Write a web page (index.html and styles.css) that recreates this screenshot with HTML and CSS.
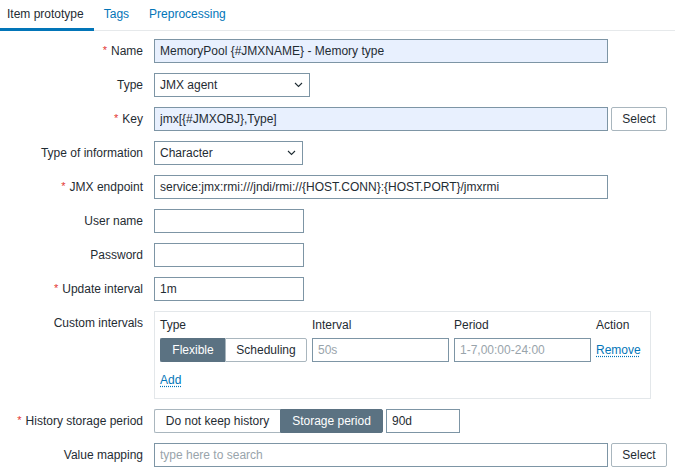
FILE: index.html
```html
<!DOCTYPE html>
<html>
<head>
<meta charset="utf-8">
<link rel="stylesheet" href="styles.css">
</head>
<body>
<div class="tabs">
  <a class="tab active">Item prototype</a>
  <a class="tab">Tags</a>
  <a class="tab">Preprocessing</a>
</div>
<form class="form">
  <label class="lbl"><span class="req">*</span>Name</label>
  <div class="field"><input class="inp w-xl filled" value="MemoryPool {#JMXNAME} - Memory type"></div>

  <label class="lbl">Type</label>
  <div class="field"><div class="select w-type"><span>JMX agent</span><svg width="9" height="6" viewBox="0 0 9 6"><path d="M1 1 L4.5 4.5 L8 1" fill="none" stroke="#1f2c33" stroke-width="1.1"/></svg></div></div>

  <label class="lbl"><span class="req">*</span>Key</label>
  <div class="field"><input class="inp w-xl filled" value="jmx[{#JMXOBJ},Type]"><button type="button" class="btn">Select</button></div>

  <label class="lbl">Type of information</label>
  <div class="field"><div class="select w-toi"><span>Character</span><svg width="9" height="6" viewBox="0 0 9 6"><path d="M1 1 L4.5 4.5 L8 1" fill="none" stroke="#1f2c33" stroke-width="1.1"/></svg></div></div>

  <label class="lbl"><span class="req">*</span>JMX endpoint</label>
  <div class="field"><input class="inp w-xl" value="service:jmx:rmi:///jndi/rmi://{HOST.CONN}:{HOST.PORT}/jmxrmi"></div>

  <label class="lbl">User name</label>
  <div class="field"><input class="inp w-sm" value=""></div>

  <label class="lbl">Password</label>
  <div class="field"><input class="inp w-sm" value=""></div>

  <label class="lbl"><span class="req">*</span>Update interval</label>
  <div class="field"><input class="inp w-sm" value="1m"></div>

  <label class="lbl">Custom intervals</label>
  <div class="field">
    <div class="intervals">
      <div class="itable">
        <div class="th">Type</div>
        <div class="th">Interval</div>
        <div class="th">Period</div>
        <div class="th">Action</div>
        <div class="seg"><span class="on s-flex">Flexible</span><span class="s-sched">Scheduling</span></div>
        <input class="inp w-int" placeholder="50s">
        <input class="inp w-int" placeholder="1-7,00:00-24:00">
        <div class="act"><a class="link">Remove</a></div>
      </div>
      <div class="add"><a class="link">Add</a></div>
    </div>
  </div>

  <label class="lbl"><span class="req">*</span>History storage period</label>
  <div class="field"><div class="seg"><span class="s-nokeep">Do not keep history</span><span class="on s-store">Storage period</span></div><input class="inp w-hist" value="90d"></div>

  <label class="lbl">Value mapping</label>
  <div class="field"><input class="inp w-xl" placeholder="type here to search"><button type="button" class="btn">Select</button></div>
</form>
</body>
</html>
```

FILE: styles.css
```css
* { box-sizing: border-box; }
body {
  margin: 0;
  font-family: "Liberation Sans", Arial, sans-serif;
  font-size: 12px;
  color: #1f2c33;
  background: #fff;
}
.tabs {
  display: flex;
  height: 31px;
  border-bottom: 1px solid #e6e9eb;
}
.tab {
  display: block;
  padding: 0 10px;
  line-height: 28px;
  height: 31px;
  border-bottom: 3px solid transparent;
  color: #0275b8;
  cursor: pointer;
}
.tab.active {
  color: #1f2c33;
  border-bottom-color: #0275b8;
  padding-left: 7px;
}
.form {
  display: grid;
  grid-template-columns: 143px auto;
  column-gap: 11px;
  row-gap: 10px;
  padding-top: 8px;
  align-items: start;
}
.lbl {
  text-align: right;
  line-height: 24px;
  white-space: nowrap;
}
.req {
  color: #e33734;
  font-size: 11px;
  margin-right: 4px;
  position: relative;
  top: -1px;
}
.field {
  display: flex;
  gap: 3px;
  align-items: flex-start;
}
.inp {
  height: 24px;
  border: 1px solid #7d95a5;
  padding: 0 5px;
  font-family: inherit;
  font-size: 12px;
  color: #1f2c33;
  background: #fff;
  border-radius: 0;
  outline: none;
  margin: 0;
}
.inp::placeholder { color: #99a4ab; }
.inp.filled { background: #e8f0fe; }
.w-xl { width: 454px; }
.w-sm { width: 150px; }
.w-int { width: 137px; }
.w-hist { width: 74px; }
.w-type { width: 156px; }
.w-toi { width: 149px; }
.select {
  height: 24px;
  border: 1px solid #7d95a5;
  padding: 0 5px;
  display: flex;
  align-items: center;
  justify-content: space-between;
  background: #fff;
}
.select svg { display: block; margin-right: 1px; }
.btn {
  height: 24px;
  width: 56px;
  border: 1px solid #a9b6be;
  border-radius: 2px;
  background: #fff;
  font-family: inherit;
  font-size: 12px;
  color: #1f2c33;
  padding: 0;
  margin: 0;
}
.intervals {
  width: 497px;
  border: 1px solid #e3e7ea;
  padding: 5px 5px 10px 5px;
}
.itable {
  display: grid;
  grid-template-columns: 147px 137px 137px auto;
  column-gap: 5px;
  row-gap: 5px;
}
.th { line-height: 16px; }
.seg {
  display: flex;
  height: 24px;
}
.seg span {
  display: block;
  height: 24px;
  line-height: 22px;
  padding: 0;
  text-align: center;
  border: 1px solid #a9b6be;
  background: #fff;
  white-space: nowrap;
}
.seg span:first-child { border-radius: 2px 0 0 2px; border-right: none; }
.seg span:last-child { border-radius: 0 2px 2px 0; }
.seg span.on {
  background: #5b7282;
  border-color: #5b7282;
  color: #fff;
}
.s-flex { width: 65px; }
.s-sched { width: 82px; }
.s-nokeep { width: 126px; }
.s-store { width: 103px; }
.act { line-height: 24px; }
.link {
  color: #0275b8;
  text-decoration: underline dotted;
  text-underline-offset: 2px;
  cursor: pointer;
}
.add {
  margin-top: 10px;
  line-height: 16px;
}
```
